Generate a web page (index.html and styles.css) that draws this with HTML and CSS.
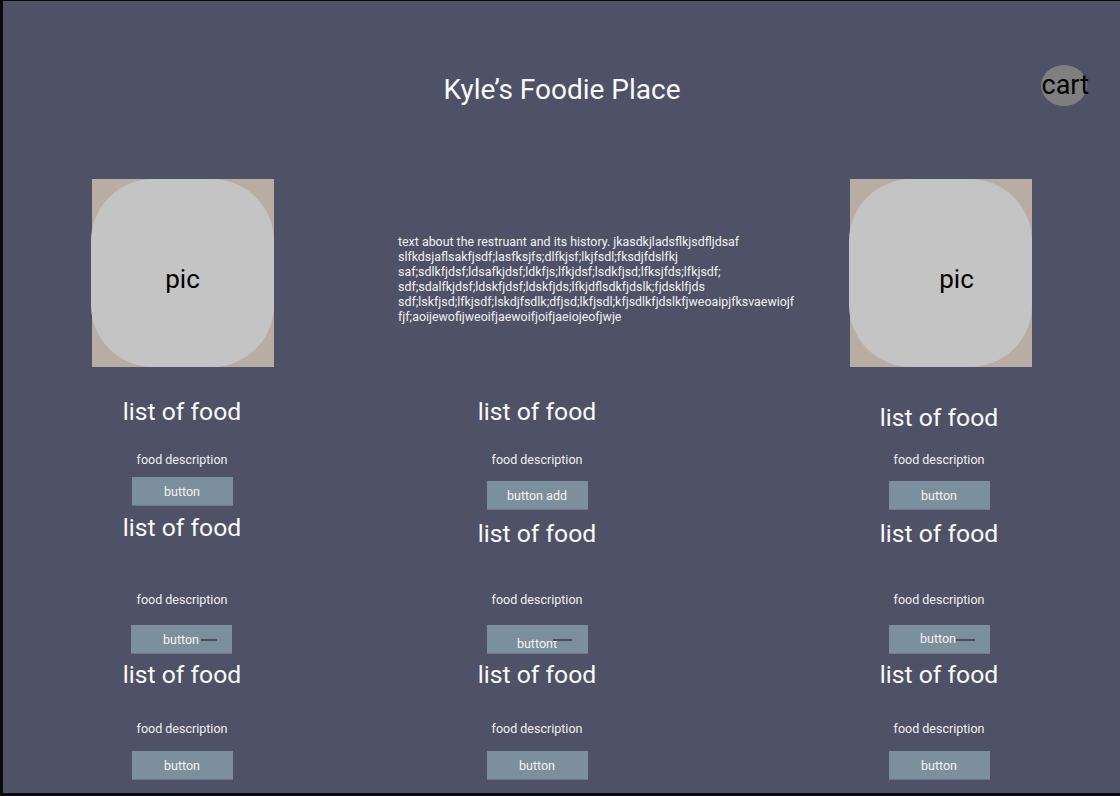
FILE: index.html
```html
<!DOCTYPE html>
<html>
<head>
<meta charset="utf-8">
<title>Kyle's Foodie Place</title>
<link rel="stylesheet" href="styles.css">
</head>
<body>
<div class="page">
  <header class="header">
    <div class="spacer"></div>
    <h1 class="title">Kyle’s Foodie Place</h1>
    <div class="cart-wrap"><span class="cart">cart</span></div>
  </header>

  <section class="intro">
    <div class="pic"><div class="pic-inner">pic</div></div>
    <p class="about">text about the restruant and its history. jkasdkjladsflkjsdfljdsaf<br>slfkdsjaflsakfjsdf;lasfksjfs;dlfkjsf;lkjfsdl;fksdjfdslfkj<br>saf;sdlkfjdsf;ldsafkjdsf;ldkfjs;lfkjdsf;lsdkfjsd;lfksjfds;lfkjsdf;<br>sdf;sdalfkjdsf;ldskfjdsf;ldskfjds;lfkjdflsdkfjdslk;fjdsklfjds<br>sdf;lskfjsd;lfkjsdf;lskdjfsdlk;dfjsd;lkfjsdl;kfjsdlkfjdslkfjweoaipjfksvaewiojf<br>fjf;aoijewofijweoifjaewoifjoifjaeiojeofjwje</p>
    <div class="pic pic-right"><div class="pic-inner pic-inner-right">pic</div></div>
  </section>

  <section class="menu">
    <div class="col col-left">
      <h2 class="food h-a">list of food</h2>
      <p class="desc d-a">food description</p>
      <button class="btn b-a1">button</button>
      <h2 class="food h-b1">list of food</h2>
      <p class="desc d-b">food description</p>
      <button class="btn b-b btn-shift">button<span class="dash dash-left"></span></button>
      <h2 class="food h-c">list of food</h2>
      <p class="desc d-c">food description</p>
      <button class="btn b-c">button</button>
    </div>
    <div class="col col-mid">
      <h2 class="food h-a">list of food</h2>
      <p class="desc d-a">food description</p>
      <button class="btn b-a2">button add</button>
      <h2 class="food h-b2">list of food</h2>
      <p class="desc d-b2">food description</p>
      <button class="btn b-b btn-low">buttont<span class="dash"></span></button>
      <h2 class="food h-c">list of food</h2>
      <p class="desc d-c">food description</p>
      <button class="btn b-c">button</button>
    </div>
    <div class="col col-right">
      <h2 class="food h-a2">list of food</h2>
      <p class="desc d-a2">food description</p>
      <button class="btn b-a2">button</button>
      <h2 class="food h-b2">list of food</h2>
      <p class="desc d-b2">food description</p>
      <button class="btn b-b btn-up">button<span class="dash dash-right"></span></button>
      <h2 class="food h-c">list of food</h2>
      <p class="desc d-c">food description</p>
      <button class="btn b-c">button</button>
    </div>
  </section>
</div>
</body>
</html>
```

FILE: styles.css
```css
* { box-sizing: border-box; }

html, body {
  margin: 0;
  padding: 0;
  background: #000;
}

body {
  font-family: Roboto, "Liberation Sans", sans-serif;
  color: #f2f2f2;
}

.page {
  width: 1120px;
  height: 796px;
  background: #4f5166;
  border-left: 3px solid #0a0a0a;
  border-top: 1px solid #0a0a0a;
  border-bottom: 3px solid #0a0a0a;
  overflow: hidden;
}

/* header */
.header {
  display: grid;
  grid-template-columns: 1fr auto 1fr;
  align-items: start;
  height: 178px;
}

.title {
  margin: 72px 0 0 1px;
  font-size: 28px;
  font-weight: 400;
  line-height: 34px;
  color: #fafafa;
  text-align: center;
}

.cart-wrap {
  justify-self: end;
  margin: 63px 31px 0 0;
}

.cart {
  position: relative;
  display: block;
  font-size: 27px;
  line-height: 42px;
  color: #000;
  z-index: 0;
}

.cart::before {
  content: "";
  position: absolute;
  left: -1px;
  top: 1px;
  width: 46px;
  height: 41px;
  border-radius: 50%;
  background: #7f7f7f;
  z-index: -1;
}

/* intro */
.intro {
  display: flex;
  align-items: flex-start;
  padding-left: 89px;
  height: 212px;
}

.pic {
  width: 182px;
  height: 188px;
  background: #b8ada2;
  flex-shrink: 0;
}

.pic-inner {
  width: 183px;
  height: 188px;
  margin-left: -1px;
  border-radius: 62px;
  background: #c4c4c4;
  display: flex;
  align-items: center;
  justify-content: center;
  font-size: 26px;
  color: #000;
  padding-top: 12px;
}

.pic-inner-right {
  padding-left: 32px;
}

.about {
  margin: 55px 0 0 124px;
  width: 452px;
  font-size: 12.4px;
  line-height: 15px;
  color: #f2f2f2;
  white-space: nowrap;
}

/* menu */
.menu {
  display: flex;
  padding-left: 79px;
}

.col {
  width: 200px;
  flex-shrink: 0;
  display: flex;
  flex-direction: column;
  align-items: center;
}

.col-mid { margin-left: 155px; }
.col-right { margin-left: 202px; }

.food {
  margin: 0;
  font-size: 24.7px;
  font-weight: 400;
  line-height: 30px;
  color: #fafafa;
  white-space: nowrap;
}

.desc {
  margin: 0;
  font-size: 12.5px;
  line-height: 16px;
  color: #f0f0f0;
  white-space: nowrap;
}

.btn {
  position: relative;
  width: 101px;
  height: 29px;
  border: none;
  border-bottom: 1px solid #6b7c88;
  background: #7c8f9c;
  color: #f4f4f4;
  font-family: Roboto, "Liberation Sans", sans-serif;
  font-size: 12.5px;
  padding: 0;
  display: flex;
  align-items: center;
  justify-content: center;
}

.btn-shift {
  margin-right: 2px;
}

.btn-up {
  padding-bottom: 2px;
  padding-right: 2px;
}

/* stray line drawn over the button */
.dash {
  position: absolute;
  left: 66px;
  top: 14px;
  width: 19px;
  height: 2px;
  background: #4a4d5f;
}

.dash-left {
  left: 70px;
  width: 16px;
}

.dash-right {
  left: 67px;
}

.btn-low {
  padding-top: 8px;
}

/* vertical rhythm */
.h-a { margin-top: 6px; }
.h-a2 { margin-top: 12px; }
.d-a { margin-top: 25px; }
.d-a2 { margin-top: 19px; }
.b-a1 { margin-top: 9px; }
.b-a2 { margin-top: 13px; }
.h-b1 { margin-top: 7px; }
.h-b2 { margin-top: 9px; }
.d-b { margin-top: 49px; }
.d-b2 { margin-top: 43px; }
.b-b { margin-top: 17px; }
.h-c { margin-top: 6px; }
.d-c { margin-top: 31px; }
.b-c { margin-top: 14px; }
```
